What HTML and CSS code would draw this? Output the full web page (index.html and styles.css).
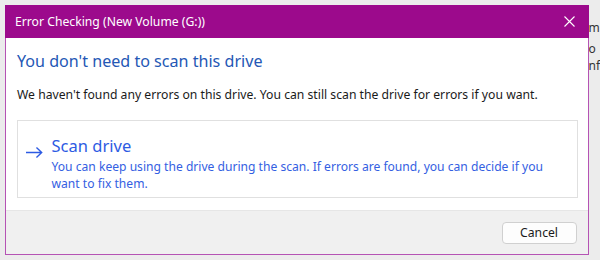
FILE: index.html
```html
<!DOCTYPE html>
<html lang="en">
<head>
    <meta charset="UTF-8">
    <title>Error Checking (New Volume (G:))</title>
    <link rel="stylesheet" href="styles.css">
</head>
<body>
    <div class="desktop">
        <div class="window">
            <div class="titlebar">
                <span class="title">Error Checking (New Volume (G:))</span>
                <button class="close-btn" aria-label="Close">
                    <svg width="11" height="11" viewBox="0 0 11 11">
                        <path d="M0.5 0.5 L10.5 10.5 M10.5 0.5 L0.5 10.5" stroke="#fff" stroke-width="1.1" fill="none"/>
                    </svg>
                </button>
            </div>
            <div class="content">
                <h1>You don't need to scan this drive</h1>
                <p class="info">We haven't found any errors on this drive. You can still scan the drive for errors if you want.</p>
                <div class="option">
                    <svg class="arrow" width="19" height="13" viewBox="0 0 19 13">
                        <path d="M0 6.5 H18 M12 0.8 L18 6.5 L12 12.2" stroke="#2d5be3" stroke-width="1.6" fill="none"/>
                    </svg>
                    <div class="option-text">
                        <div class="option-title">Scan drive</div>
                        <div class="option-desc">You can keep using the drive during the scan. If errors are found, you can decide if you want to fix them.</div>
                    </div>
                </div>
            </div>
            <div class="footer">
                <button class="cancel-btn">Cancel</button>
            </div>
        </div>
        <div class="behind">
            <span class="frag-m">m</span>
            <span class="frag-o">o</span>
            <span class="frag-nf">nf</span>
        </div>
    </div>
</body>
</html>
```

FILE: styles.css
```css
body {
    margin: 0;
    background: #ececec;
    font-family: "Noto Sans", "Open Sans", sans-serif;
}

.desktop {
    display: flex;
    height: 260px;
    padding-top: 5px;
    padding-left: 5px;
    box-sizing: border-box;
}

.window {
    width: 588px;
    height: 250px;
    box-sizing: border-box;
    border: 1px solid #b553b4;
    border-top: none;
    display: flex;
    flex-direction: column;
    background: #fff;
}

.titlebar {
    height: 33px;
    background: #9c0a8c;
    color: #fff;
    display: flex;
    align-items: center;
    justify-content: space-between;
    padding: 0 11px 0 10px;
    margin: 0 -1px;
}

.title {
    font-size: 12.2px;
}

.close-btn {
    background: none;
    border: none;
    padding: 0;
    width: 16px;
    display: flex;
    justify-content: center;
}

.content {
    flex: 1;
    padding: 12px 10px 0 11px;
}

h1 {
    font-size: 16.1px;
    font-weight: 400;
    color: #2457b5;
    margin: 0 0 14px 0;
}

.info {
    font-size: 12.2px;
    color: #1a1a1a;
    margin: 0 0 17px 0;
}

.option {
    border: 1px solid #e0e0e0;
    height: 78px;
    box-sizing: border-box;
    display: flex;
    align-items: flex-start;
    padding: 14px 10px 0 8px;
}

.arrow {
    margin-top: 11px;
    margin-right: 9px;
}

.option-title {
    font-size: 16.5px;
    color: #2d5be3;
    line-height: 22px;
}

.option-desc {
    font-size: 12.1px;
    color: #3460e2;
    line-height: 17px;
    margin-top: 1px;
}

.footer {
    height: 43px;
    background: #f0f0f0;
    border-top: 1px solid #e6e6e6;
    display: flex;
    align-items: center;
    justify-content: flex-end;
    padding-right: 11px;
}

.cancel-btn {
    width: 75px;
    height: 22px;
    background: #fdfdfd;
    border: 1px solid #d0d0d0;
    border-radius: 4px;
    font-family: inherit;
    font-size: 12.2px;
    color: #1a1a1a;
}

.behind {
    display: flex;
    flex-direction: column;
    font-size: 12px;
    color: #333;
    line-height: 12px;
    overflow: hidden;
}

.frag-m {
    margin-top: 17px;
}

.frag-o {
    margin-top: 9px;
}

.frag-nf {
    margin-top: 5px;
}
```
